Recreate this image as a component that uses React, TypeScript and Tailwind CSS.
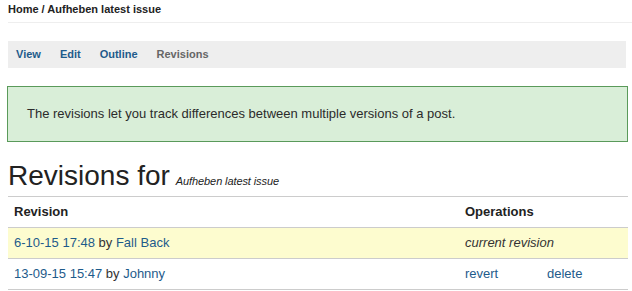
import React from "react";

const rows = [
  { date: "6-10-15 17:48", user: "Fall Back", current: true },
  { date: "13-09-15 15:47", user: "Johnny", current: false },
];

export default function App() {
  return (
    <div className="w-[632px] h-[291px] overflow-hidden bg-white text-[#333] font-['Liberation_Sans',Arial,sans-serif]">
      <div className="pl-[8px] pt-[1px] h-[22px] text-[11px] font-bold leading-[16px] text-[#222]">
        Home / Aufheben latest issue
      </div>
      <div className="ml-[8px] border-t border-[#eeeeee]" />

      <div className="mt-[18px] mx-[8px] mr-[6px] h-[27px] bg-[#eeeeee] flex items-center pl-[8px] gap-[19px] text-[11px] font-bold">
        <span className="text-[#1e5b8b]">View</span>
        <span className="text-[#1e5b8b]">Edit</span>
        <span className="text-[#1e5b8b]">Outline</span>
        <span className="text-[#666]">Revisions</span>
      </div>

      <div className="mt-[18px] ml-[7px] mr-[4px] h-[56px] border border-[#5a9a5a] bg-[#d9eed8] flex items-center pl-[19px] text-[13px] text-[#2b2b2b]">
        The revisions let you track differences between multiple versions of a post.
      </div>

      <div className="mt-[20px] pl-[8px] flex items-baseline leading-[28px]">
        <span className="text-[28px] text-[#222]">Revisions for</span>
        <span className="ml-[6px] text-[11px] italic tracking-[-0.1px] text-[#222]">
          Aufheben latest issue
        </span>
      </div>

      <table className="mt-[1px] ml-[8px] w-[620px] border-collapse text-[13px]">
        <thead>
          <tr className="border-t border-b border-[#cccccc] h-[31px]">
            <th className="text-left font-bold pl-[6px] text-[#222] w-[457px]">Revision</th>
            <th className="text-left font-bold text-[#222]" colSpan={2}>Operations</th>
          </tr>
        </thead>
        <tbody>
          {rows.map((r) => (
            <tr
              key={r.date}
              className={`border-b border-[#cccccc] h-[31px] ${r.current ? "bg-[#fdfccf]" : ""}`}
            >
              <td className="pl-[6px]">
                <span className="text-[#1e5b8b]">{r.date}</span> by{" "}
                <span className="text-[#1e5b8b]">{r.user}</span>
              </td>
              {r.current ? (
                <td className="italic text-[#333]" colSpan={2}>current revision</td>
              ) : (
                <>
                  <td className="text-[#1e5b8b] w-[82px]">revert</td>
                  <td className="text-[#1e5b8b]">delete</td>
                </>
              )}
            </tr>
          ))}
        </tbody>
      </table>
    </div>
  );
}
